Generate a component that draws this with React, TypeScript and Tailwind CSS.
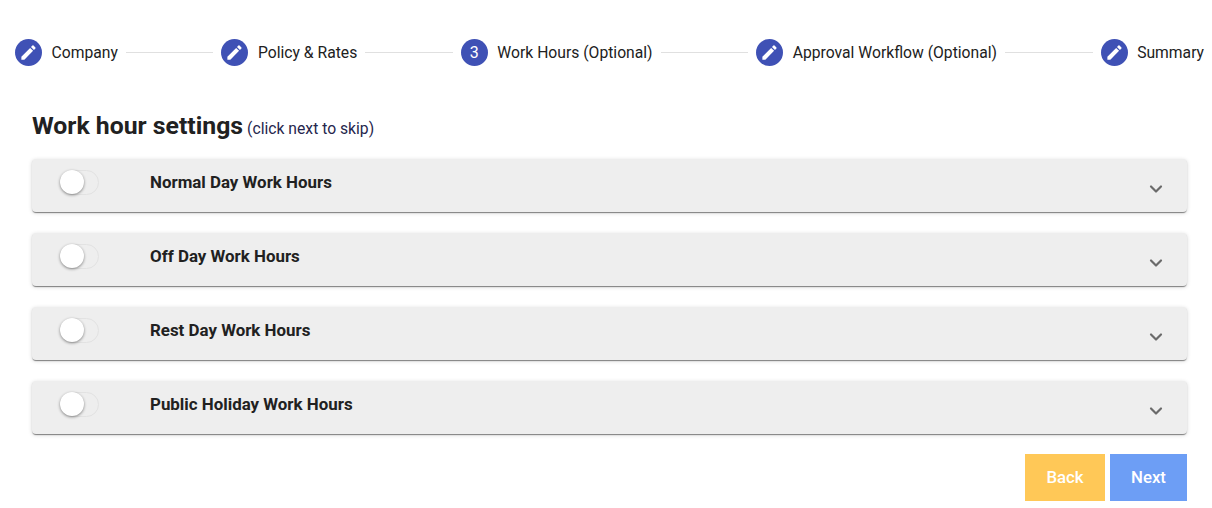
import { ChevronDown } from "lucide-react";

const steps = [
  { label: "Company", edit: true },
  { label: "Policy & Rates", edit: true },
  { label: "Work Hours (Optional)", edit: false, num: "3" },
  { label: "Approval Workflow (Optional)", edit: true },
  { label: "Summary", edit: true },
];

const rows = [
  "Normal Day Work Hours",
  "Off Day Work Hours",
  "Rest Day Work Hours",
  "Public Holiday Work Hours",
];

function StepIcon({ edit, num }: { edit: boolean; num?: string }) {
  return (
    <div className="w-[27px] h-[27px] rounded-full bg-[#3f51b5] text-white flex items-center justify-center text-[16px] shrink-0">
      {edit ? (
        <svg viewBox="0 0 24 24" className="w-[19px] h-[19px]" fill="currentColor">
          <path d="M3 17.25V21h3.75L17.81 9.94l-3.75-3.75L3 17.25zM20.71 7.04a1 1 0 0 0 0-1.41l-2.34-2.34a1 1 0 0 0-1.41 0l-1.83 1.83 3.75 3.75 1.83-1.83z" />
        </svg>
      ) : (
        num
      )}
    </div>
  );
}

function Toggle() {
  return (
    <div className="relative w-[39px] h-[25px] rounded-full border border-[#e2e2e2] bg-[#eeeeee]">
      <div className="absolute left-[-1px] top-[-0.5px] w-[24px] h-[24px] rounded-full bg-white shadow-[0_1px_3px_rgba(0,0,0,0.45)]" />
    </div>
  );
}

export default function App() {
  return (
    <div className="w-[1212px] h-[508px] bg-white overflow-hidden font-['Roboto',sans-serif] text-[#212121]">
      <div className="flex items-center pl-[15px] pr-[8px] pt-[39px]">
        {steps.map((s, i) => (
          <div key={s.label} className="contents">
            <div className="flex items-center gap-[9.5px]">
              <StepIcon edit={s.edit} num={s.num} />
              <span className="text-[15.7px] leading-[27px] whitespace-nowrap">{s.label}</span>
            </div>
            {i < steps.length - 1 && <div className="h-px flex-1 mx-2 bg-[#e0e0e0]" />}
          </div>
        ))}
      </div>

      <div className="px-[32px] pt-[44px] w-[1187px] box-content">
        <div className="flex items-baseline gap-[4px] h-[35px] w-[1155px]">
          <span className="text-[24.8px] font-bold leading-[32px]">Work hour settings</span>
          <span className="text-[15.7px] text-[#26264d]">(click next to skip)</span>
        </div>

        <div className="flex flex-col gap-[20.4px] mt-[13.7px] w-[1155px]">
          {rows.map((r) => (
            <div
              key={r}
              className="h-[53.6px] bg-[#eeeeee] rounded-[4px] shadow-[0_2px_1px_-1px_rgba(0,0,0,0.3),0_1px_1px_0_rgba(0,0,0,0.2),0_1px_4px_0_rgba(0,0,0,0.16)] flex items-start pl-[28px] pr-[21px]"
            >
              <div className="mt-[11px]"><Toggle /></div>
              <span className="ml-[51px] mt-[13px] text-[16.9px] font-bold leading-[20px]">{r}</span>
              <ChevronDown className="ml-auto mt-[20px] w-[20px] h-[20px] text-[#6a6a6a]" strokeWidth={2.6} />
            </div>
          ))}
        </div>

        <div className="flex justify-end gap-[5px] mt-[19.7px] w-[1155px]">
          <button className="w-[80px] h-[47px] bg-[#ffc857] text-white text-[16.8px] font-medium">Back</button>
          <button className="w-[77px] h-[47px] bg-[#6d9ef5] text-white text-[16.8px] font-medium">Next</button>
        </div>
      </div>
    </div>
  );
}
